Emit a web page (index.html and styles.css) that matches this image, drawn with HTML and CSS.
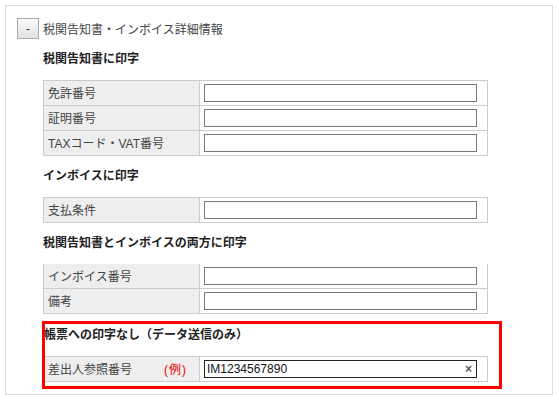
FILE: index.html
```html
<!DOCTYPE html>
<html lang="ja">
<head>
  <meta charset="UTF-8">
  <title>税関告知書・インボイス詳細情報</title>
  <link rel="stylesheet" href="styles.css">
</head>
<body>
  <div class="panel">
    <div class="panel-head">
      <button class="toggle" type="button">-</button>
      <span class="panel-title">税関告知書・インボイス詳細情報</span>
    </div>
    <div class="panel-body">
      <h3 class="sec-title">税関告知書に印字</h3>
      <div class="fields">
        <div class="row">
          <div class="label">免許番号</div>
          <div class="value"><input class="text" type="text"></div>
        </div>
        <div class="row">
          <div class="label">証明番号</div>
          <div class="value"><input class="text" type="text"></div>
        </div>
        <div class="row">
          <div class="label">TAXコード・VAT番号</div>
          <div class="value"><input class="text" type="text"></div>
        </div>
      </div>

      <h3 class="sec-title">インボイスに印字</h3>
      <div class="fields">
        <div class="row">
          <div class="label">支払条件</div>
          <div class="value"><input class="text" type="text"></div>
        </div>
      </div>

      <h3 class="sec-title">税関告知書とインボイスの両方に印字</h3>
      <div class="fields no-top">
        <div class="row">
          <div class="label">インボイス番号</div>
          <div class="value"><input class="text" type="text"></div>
        </div>
        <div class="row">
          <div class="label">備考</div>
          <div class="value"><input class="text" type="text"></div>
        </div>
      </div>

      <div class="marked">
        <h3 class="sec-title">帳票への印字なし（データ送信のみ）</h3>
        <div class="fields">
          <div class="row">
            <div class="label">差出人参照番号<span class="example">(例)</span></div>
            <div class="value">
              <span class="text filled">
                <input type="text" value="IM1234567890">
                <span class="clear">×</span>
              </span>
            </div>
          </div>
        </div>
      </div>
    </div>
  </div>
</body>
</html>
```

FILE: styles.css
```css
* {
  padding: 0;
  margin: 0;
  box-sizing: border-box;
}
body {
  padding: 5px;
  background: #fff;
  color: #333;
  font-family: "Liberation Sans", "Noto Sans CJK JP", sans-serif;
  font-size: 12px;
}
.panel {
  width: 548px;
  border: 1px solid #ddd;
  padding: 12px 0 12px 11px;
}
.panel-head {
  display: flex;
  align-items: center;
  gap: 4px;
  height: 21px;
}
.toggle {
  width: 22px;
  height: 21px;
  border: 1px solid #aaa;
  background: linear-gradient(#fafafa, #e2e2e2);
  color: #333;
  font: 12px "Liberation Sans", sans-serif;
  line-height: 18px;
}
.panel-title {
  color: #444;
}
.panel-body {
  padding-left: 26px;
}
.sec-title {
  margin: 11px 0 12px;
  height: 18px;
  line-height: 18px;
  font-size: 12px;
  font-weight: bold;
  color: #222;
}
.fields {
  width: 445px;
  border: 1px solid #ccc;
}
.fields.no-top {
  border-top: 0;
  margin-top: 1px;
}
.row {
  display: grid;
  grid-template-columns: 156px 1fr;
  height: 24px;
}
.row + .row {
  border-top: 1px solid #ccc;
  height: 25px;
}
.label {
  display: flex;
  align-items: center;
  padding: 0 0 2px 4px;
  background: #eee;
  border-right: 1px solid #ccc;
  color: #444;
}
.example {
  margin-left: 32px;
  color: #e00;
  letter-spacing: 1px;
}
.value {
  display: flex;
  align-items: center;
  padding-left: 4px;
}
.text {
  width: 273px;
  height: 18px;
  border: 1px solid #777;
  background: #fff;
  font: 12px "Liberation Sans", sans-serif;
  color: #111;
  outline: none;
}
.text.filled {
  display: flex;
  align-items: center;
  border-color: #222;
  padding: 0 4px 0 2px;
}
.text.filled input {
  flex: 1;
  min-width: 0;
  border: 0;
  outline: none;
  font: 12px "Liberation Sans", sans-serif;
  color: #111;
}
.clear {
  color: #555;
  font-size: 12px;
  font-weight: bold;
  line-height: 1;
}
.marked {
  position: relative;
  width: 445px;
  margin-top: 12px;
}
.marked .sec-title {
  margin-top: 0;
  padding-left: 1px;
}
.marked::after {
  content: "";
  position: absolute;
  top: -5px;
  left: -1px;
  right: -14px;
  bottom: -7px;
  border: 3px solid #f00;
  pointer-events: none;
}
```
